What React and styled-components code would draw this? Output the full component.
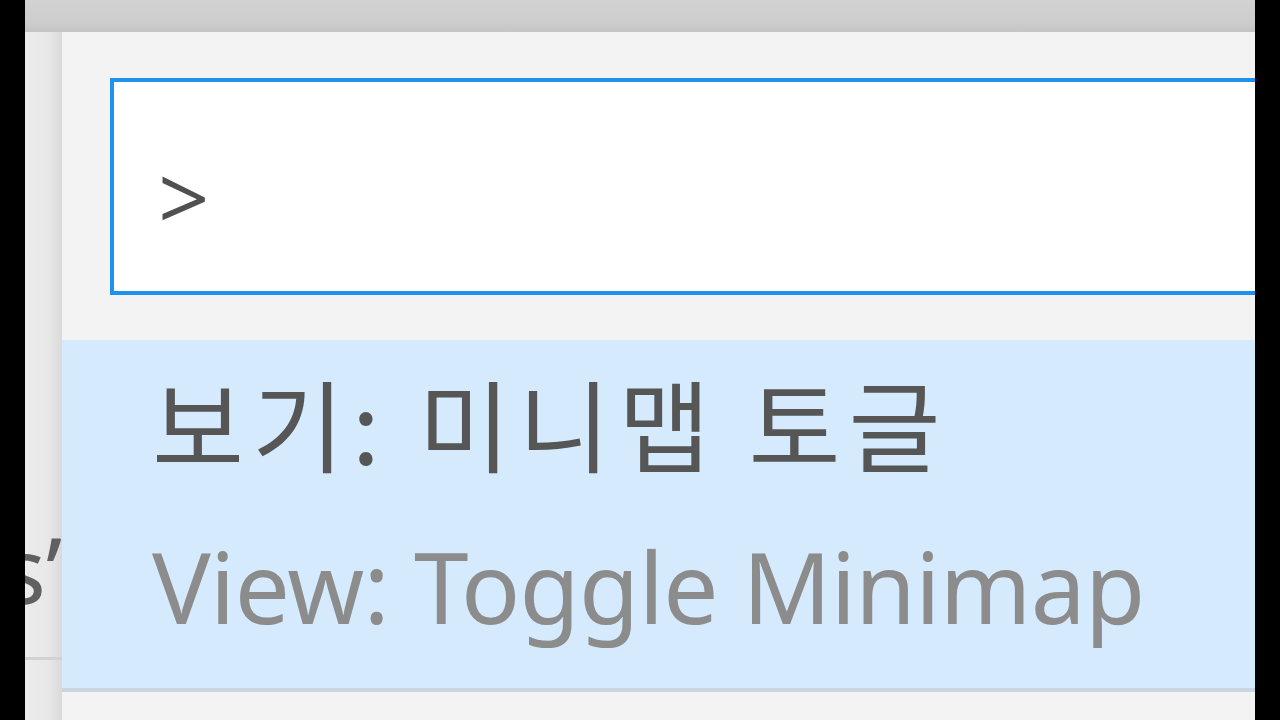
import React from "react"
import styled, { createGlobalStyle } from "styled-components"

const GlobalStyle = createGlobalStyle`
  html, body {
    margin: 0;
    padding: 0;
    background: #000;
  }
  #root {
    width: 1280px;
    height: 720px;
  }
`

const Screen = styled.div`
  display: flex;
  width: 1280px;
  height: 720px;
  background: #000;
  overflow: hidden;
`

const Edge = styled.div`
  width: 25px;
  flex-shrink: 0;
  background: #000;
`

const Window = styled.div`
  flex: 1;
  display: flex;
  flex-direction: column;
  min-width: 0;
`

const TopBand = styled.div`
  height: 32px;
  flex-shrink: 0;
  background: linear-gradient(#d2d2d2 0%, #cdcdcd 70%, #c4c4c4 100%);
`

const Body = styled.div`
  flex: 1;
  display: flex;
  min-height: 0;
`

const SidePanel = styled.div`
  width: 37px;
  flex-shrink: 0;
  display: flex;
  flex-direction: column;
  background: linear-gradient(90deg, #ececec 0%, #e8e8e8 60%, #dadada 100%);
`

const SideText = styled.div`
  margin-top: 482px;
  height: 110px;
  display: flex;
  justify-content: flex-end;
  overflow: hidden;
  font-family: "Noto Sans", "Open Sans", sans-serif;
  font-size: 92px;
  line-height: 110px;
  color: #606060;
  white-space: nowrap;
`

const SideRule = styled.div`
  margin-top: 33px;
  height: 3px;
  background: #d2d2d2;
`

const Palette = styled.div`
  flex: 1;
  display: flex;
  flex-direction: column;
  background: #f3f3f3;
  padding-top: 46px;
  min-width: 0;
  overflow: hidden;
`

const InputBox = styled.div`
  margin-left: 48px;
  margin-right: -40px;
  height: 209px;
  border: 4px solid #1f92ee;
  background: #fff;
  display: flex;
  align-items: center;
  padding-left: 44px;
  flex-shrink: 0;
`

const Prompt = styled.span`
  font-family: "Open Sans", "Noto Sans", sans-serif;
  font-weight: 400;
  font-size: 90px;
  color: #505050;
  line-height: 1;
  margin-top: 18px;
`

const ResultRow = styled.div`
  margin-top: 45px;
  height: 348px;
  flex-shrink: 0;
  background: #d6eafd;
  border-bottom: 4px solid #cbd5e2;
  padding-left: 90px;
  display: flex;
  flex-direction: column;
`

const Label = styled.div`
  font-family: "Noto Sans CJK KR", "Noto Sans", sans-serif;
  font-size: 100px;
  line-height: 120px;
  letter-spacing: 8px;
  margin-top: 22px;
  color: #565656;
  white-space: nowrap;
`

const Detail = styled.div`
  font-family: "Noto Sans", "Open Sans", sans-serif;
  font-size: 98px;
  line-height: 120px;
  letter-spacing: -0.7px;
  margin-top: 44px;
  color: #8c8c8c;
  white-space: nowrap;
`

export default function App() {
  return (
    <>
      <GlobalStyle />
      <Screen>
        <Edge />
        <Window>
          <TopBand />
          <Body>
            <SidePanel>
              <SideText>ts’</SideText>
              <SideRule />
            </SidePanel>
            <Palette>
              <InputBox>
                <Prompt>&gt;</Prompt>
              </InputBox>
              <ResultRow>
                <Label>보기: 미니맵 토글</Label>
                <Detail>View: Toggle Minimap</Detail>
              </ResultRow>
            </Palette>
          </Body>
        </Window>
        <Edge />
      </Screen>
    </>
  )
}
